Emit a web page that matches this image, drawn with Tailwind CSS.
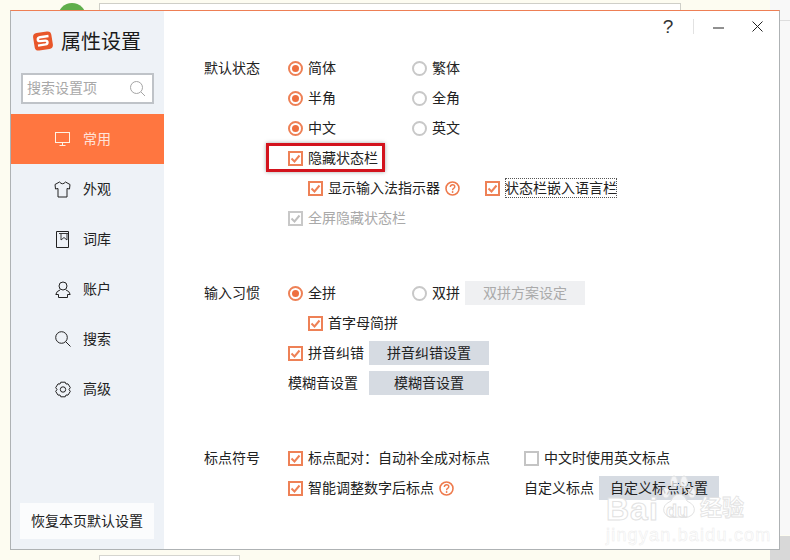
<!DOCTYPE html>
<html lang="zh-CN">
<head>
<meta charset="UTF-8">
<title>属性设置</title>
<script src="https://cdn.jsdelivr.net/npm/@tailwindcss/browser@4"></script>
</head>
<body class="relative w-[790px] h-[560px] overflow-hidden bg-[#fdfcf1] font-['Liberation_Sans','Noto_Sans_CJK_SC',sans-serif] text-[14px] text-[#222]">

<!-- desktop behind the window -->
<div class="absolute left-[58px] top-[3px] w-[28px] h-[28px] rounded-full bg-[#5fae4a]"></div>
<div class="absolute left-[99px] top-[3px] w-[582px] h-[20px] bg-white border border-[#cfcfc8]"></div>
<div class="absolute left-[770px] top-0 w-[20px] h-[535px] bg-[#f8f8f8]"></div>
<div class="absolute left-[770px] top-[20px] w-[20px] h-px bg-[#ddd]"></div>
<div class="absolute left-[770px] top-[536px] w-[20px] h-[24px] bg-[#d8d8d8]"></div>
<div class="absolute left-[99px] top-[555px] w-[141px] h-[10px] bg-white border border-[#d5d5d0]"></div>

<!-- window -->
<div class="absolute left-[10px] top-[10px] w-[770px] h-[540px] flex bg-white border border-[#aeb2b4] border-t-[#ee7f55]">
  <!-- sidebar -->
  <aside class="w-[153px] bg-[#eef2f7] flex flex-col">
    <div class="h-[60px] pl-[22px] pt-[19px] flex items-start gap-[8px]">
      <svg class="mt-[1px]" width="20" height="20" viewBox="0 0 20 20">
        <rect x="0.8" y="1.2" width="18.4" height="17.6" rx="4" fill="#e8562a" transform="rotate(-9 10 10)"/>
        <path d="M15.5 5 L7 6.2 Q4.6 6.6 4.8 8.5 Q5 10.3 7.2 10.1 L12.2 9.6 Q14.4 9.5 14.5 11.2 Q14.6 13 12.6 13.4 L5 14.6" fill="none" stroke="#fff" stroke-width="2.4"/>
      </svg>
      <span class="text-[20px] leading-[24px] text-[#1a1a1a]">属性设置</span>
    </div>
    <div class="ml-[10px] mt-[2px] w-[133px] h-[31px] bg-white border-[2px] border-[#bfc3c8] flex items-center justify-between pl-[4px] pr-[6px]">
      <span class="text-[#a8a8a8]">搜索设置项</span>
      <svg width="17" height="17" viewBox="0 0 17 17" fill="none" stroke="#a5a5a5" stroke-width="1"><circle cx="7.5" cy="7.5" r="6"/><path d="M12 12l4 4"/></svg>
    </div>
    <nav class="mt-[10px] flex flex-col">
      <a class="h-[50px] bg-[#ff7640] flex items-center pl-[44px] gap-[13px]">
        <svg class="shrink-0" width="15" height="14" viewBox="0 0 15 14" fill="none" stroke="#fff3e4" stroke-width="1"><rect x="0.5" y="0.5" width="14" height="10"/><path d="M7.5 10.5v3M4.5 13.5h6"/></svg>
        <span class="text-white/80">常用</span>
      </a>
      <a class="h-[50px] flex items-center pl-[43px] gap-[12px]">
        <svg class="shrink-0" width="17" height="17" viewBox="0 0 17 17" fill="none" stroke="#222" stroke-width="1"><path d="M5.5 1 L1 3.5 L1.5 8 L4 7.5 V16 H13 V7.5 L15.5 8 L16 3.5 L11.5 1 Q8.5 4.5 5.5 1Z"/></svg>
        <span>外观</span>
      </a>
      <a class="h-[50px] flex items-center pl-[45px] gap-[13px]">
        <svg class="shrink-0" width="14" height="17" viewBox="0 0 14 17" fill="none" stroke="#222" stroke-width="1"><path d="M0.5 0.5H12.5V16.5H0.5Z"/><path d="M3 2.5H12.5M5 3V9L8 6.5L11 9V3" stroke-width="0.9"/></svg>
        <span>词库</span>
      </a>
      <a class="h-[50px] flex items-center pl-[44px] gap-[12px]">
        <svg class="shrink-0" width="16" height="17" viewBox="0 0 16 17" fill="none" stroke="#222" stroke-width="1"><circle cx="8" cy="5" r="4"/><path d="M5 9 Q1.5 10 0.8 13.5 H3.5 V16.5 H12.5 V13.5 H15.2 Q14.5 10 11 9"/></svg>
        <span>账户</span>
      </a>
      <a class="h-[50px] flex items-center pl-[44px] gap-[12px]">
        <svg class="shrink-0" width="16" height="16" viewBox="0 0 16 16" fill="none" stroke="#222" stroke-width="1"><circle cx="6.5" cy="6.5" r="5.8"/><path d="M10.7 10.7L15.5 15.5"/></svg>
        <span>搜索</span>
      </a>
      <a class="h-[50px] flex items-center pl-[44px] gap-[12px]">
        <svg class="shrink-0" width="16" height="17" viewBox="0 0 16 17" fill="none" stroke="#222" stroke-width="1"><path d="M5.8 1.2 H10.2 L11 3 L13 2.9 L15.3 6.6 L14 8.5 L15.3 10.4 L13 14.1 L11 14 L10.2 15.8 H5.8 L5 14 L3 14.1 L0.7 10.4 L2 8.5 L0.7 6.6 L3 2.9 L5 3Z"/><circle cx="8" cy="8.5" r="2.7"/></svg>
        <span>高级</span>
      </a>
    </nav>
    <button class="mt-auto mb-[10px] ml-[9px] w-[134px] h-[36px] bg-[#fbfcfd] text-[#222]">恢复本页默认设置</button>
  </aside>

  <!-- main -->
  <main class="flex-1 relative pl-[40px] pt-[42px]">
    <!-- title bar buttons -->
    <div class="absolute right-[16px] top-[3px] h-[24px] flex items-center">
      <span class="text-[19px] leading-none text-[#333] w-[28px] text-center">?</span>
      <span class="w-px h-[15px] bg-[#e2e2e2] ml-[11px]"></span>
      <svg class="ml-[19px] mt-[3px]" width="11" height="2" viewBox="0 0 11 2"><path d="M0 1h11" stroke="#222" stroke-width="1"/></svg>
      <svg class="ml-[28px]" width="11" height="11" viewBox="0 0 11 11" fill="none" stroke="#222" stroke-width="1"><path d="M0.5 0.5L10.5 10.5M10.5 0.5L0.5 10.5"/></svg>
    </div>

    <!-- default state -->
    <section class="flex">
      <div class="w-[84px] h-[30px] leading-[30px]">默认状态</div>
      <div class="flex-1">
        <div class="h-[30px] flex items-center">
          <label class="w-[124px] flex items-center gap-[5px]"><span class="w-[15px] h-[15px] rounded-full border-[2px] border-[#ee8156] flex items-center justify-center"><span class="w-[7px] h-[7px] rounded-full bg-[#ee6f3f]"></span></span>简体</label>
          <label class="flex items-center gap-[5px]"><span class="w-[15px] h-[15px] rounded-full border-[2px] border-[#c8c8c8]"></span>繁体</label>
        </div>
        <div class="h-[30px] flex items-center">
          <label class="w-[124px] flex items-center gap-[5px]"><span class="w-[15px] h-[15px] rounded-full border-[2px] border-[#ee8156] flex items-center justify-center"><span class="w-[7px] h-[7px] rounded-full bg-[#ee6f3f]"></span></span>半角</label>
          <label class="flex items-center gap-[5px]"><span class="w-[15px] h-[15px] rounded-full border-[2px] border-[#c8c8c8]"></span>全角</label>
        </div>
        <div class="h-[30px] flex items-center">
          <label class="w-[124px] flex items-center gap-[5px]"><span class="w-[15px] h-[15px] rounded-full border-[2px] border-[#ee8156] flex items-center justify-center"><span class="w-[7px] h-[7px] rounded-full bg-[#ee6f3f]"></span></span>中文</label>
          <label class="flex items-center gap-[5px]"><span class="w-[15px] h-[15px] rounded-full border-[2px] border-[#c8c8c8]"></span>英文</label>
        </div>
        <div class="h-[30px] flex items-center gap-[5px]">
          <svg width="15" height="15" viewBox="0 0 15 15" fill="none"><rect x="1" y="1" width="13" height="13" stroke="#ee8156" stroke-width="2"/><path d="M3.5 7.5L6.5 10.5L11.5 4.5" stroke="#ee8156" stroke-width="2"/></svg>
          <span>隐藏状态栏</span>
        </div>
        <div class="h-[30px] flex items-center pl-[20px]">
          <svg width="15" height="15" viewBox="0 0 15 15" fill="none"><rect x="1" y="1" width="13" height="13" stroke="#ee8156" stroke-width="2"/><path d="M3.5 7.5L6.5 10.5L11.5 4.5" stroke="#ee8156" stroke-width="2"/></svg>
          <span class="ml-[5px]">显示输入法指示器</span>
          <svg class="ml-[5px]" width="15" height="15" viewBox="0 0 15 15" fill="none"><circle cx="7.5" cy="7.5" r="6.5" stroke="#ee7a4c" stroke-width="1.6"/><path d="M5.3 6Q5.5 3.8 7.6 3.8Q9.8 3.8 9.8 5.7Q9.8 6.8 8.6 7.4Q7.6 7.9 7.6 9.2" stroke="#ee7a4c" stroke-width="1.4"/><circle cx="7.6" cy="11" r="0.9" fill="#ee7a4c"/></svg>
          <svg class="ml-[25px]" width="15" height="15" viewBox="0 0 15 15" fill="none"><rect x="1" y="1" width="13" height="13" stroke="#ee8156" stroke-width="2"/><path d="M3.5 7.5L6.5 10.5L11.5 4.5" stroke="#ee8156" stroke-width="2"/></svg>
          <span class="ml-[5px] outline outline-1 outline-dotted outline-offset-[-1px] outline-[#555] leading-[20px]">状态栏嵌入语言栏</span>
        </div>
        <div class="h-[30px] flex items-center gap-[5px] text-[#a9a9a9]">
          <svg width="15" height="15" viewBox="0 0 15 15" fill="none"><rect x="1" y="1" width="13" height="13" stroke="#c8c8c8" stroke-width="2"/><path d="M3.5 7.5L6.5 10.5L11.5 4.5" stroke="#c0c0c0" stroke-width="2"/></svg>
          <span>全屏隐藏状态栏</span>
        </div>
      </div>
    </section>

    <!-- input habit -->
    <section class="flex mt-[45px]">
      <div class="w-[84px] h-[30px] leading-[30px]">输入习惯</div>
      <div class="flex-1">
        <div class="h-[30px] flex items-center">
          <label class="w-[124px] flex items-center gap-[5px]"><span class="w-[15px] h-[15px] rounded-full border-[2px] border-[#ee8156] flex items-center justify-center"><span class="w-[7px] h-[7px] rounded-full bg-[#ee6f3f]"></span></span>全拼</label>
          <label class="flex items-center gap-[5px]"><span class="w-[15px] h-[15px] rounded-full border-[2px] border-[#c8c8c8]"></span>双拼</label>
          <button class="ml-[5px] w-[120px] h-[24px] bg-[#eff0f2] text-[#aaa]">双拼方案设定</button>
        </div>
        <div class="h-[30px] flex items-center gap-[5px] pl-[20px]">
          <svg width="15" height="15" viewBox="0 0 15 15" fill="none"><rect x="1" y="1" width="13" height="13" stroke="#ee8156" stroke-width="2"/><path d="M3.5 7.5L6.5 10.5L11.5 4.5" stroke="#ee8156" stroke-width="2"/></svg>
          <span>首字母简拼</span>
        </div>
        <div class="h-[30px] flex items-center">
          <svg width="15" height="15" viewBox="0 0 15 15" fill="none"><rect x="1" y="1" width="13" height="13" stroke="#ee8156" stroke-width="2"/><path d="M3.5 7.5L6.5 10.5L11.5 4.5" stroke="#ee8156" stroke-width="2"/></svg>
          <span class="ml-[5px] w-[61px]">拼音纠错</span>
          <button class="w-[120px] h-[24px] bg-[#d6dbe2]">拼音纠错设置</button>
        </div>
        <div class="h-[30px] flex items-center">
          <span class="w-[81px]">模糊音设置</span>
          <button class="w-[120px] h-[24px] bg-[#d6dbe2]">模糊音设置</button>
        </div>
      </div>
    </section>

    <!-- punctuation -->
    <section class="flex mt-[45px]">
      <div class="w-[84px] h-[30px] leading-[30px]">标点符号</div>
      <div class="flex-1">
        <div class="h-[30px] flex items-center">
          <svg width="15" height="15" viewBox="0 0 15 15" fill="none"><rect x="1" y="1" width="13" height="13" stroke="#ee8156" stroke-width="2"/><path d="M3.5 7.5L6.5 10.5L11.5 4.5" stroke="#ee8156" stroke-width="2"/></svg>
          <span class="ml-[5px] w-[216px]">标点配对：自动补全成对标点</span>
          <svg width="15" height="15" viewBox="0 0 15 15" fill="none"><rect x="1" y="1" width="13" height="13" stroke="#c4c4c4" stroke-width="2"/></svg>
          <span class="ml-[5px]">中文时使用英文标点</span>
        </div>
        <div class="h-[30px] flex items-center">
          <svg width="15" height="15" viewBox="0 0 15 15" fill="none"><rect x="1" y="1" width="13" height="13" stroke="#ee8156" stroke-width="2"/><path d="M3.5 7.5L6.5 10.5L11.5 4.5" stroke="#ee8156" stroke-width="2"/></svg>
          <span class="ml-[5px]">智能调整数字后标点</span>
          <svg class="ml-[5px]" width="15" height="15" viewBox="0 0 15 15" fill="none"><circle cx="7.5" cy="7.5" r="6.5" stroke="#ee7a4c" stroke-width="1.6"/><path d="M5.3 6Q5.5 3.8 7.6 3.8Q9.8 3.8 9.8 5.7Q9.8 6.8 8.6 7.4Q7.6 7.9 7.6 9.2" stroke="#ee7a4c" stroke-width="1.4"/><circle cx="7.6" cy="11" r="0.9" fill="#ee7a4c"/></svg>
          <span class="ml-[70px] w-[75px]">自定义标点</span>
          <button class="w-[120px] h-[24px] bg-[#d6dbe2]">自定义标点设置</button>
        </div>
      </div>
    </section>
  </main>
</div>

<!-- red annotation -->
<div class="absolute left-[266px] top-[143px] w-[119px] h-[29px] border-[3px] border-[#d3131d] shadow-[0_0_4px_rgba(0,0,0,0.35)]"></div>

<!-- watermark -->
<div class="absolute left-[606px] top-[484px] w-[142px] h-[62px] text-white pointer-events-none">
  <svg class="absolute left-[52px] top-[-9px]" width="42" height="45" viewBox="0 0 42 45" fill="#fff" fill-opacity="0.7" stroke="#e2e2e2">
    <ellipse cx="8" cy="18" rx="3.5" ry="5"/>
    <ellipse cx="16" cy="7" rx="3.5" ry="6"/>
    <ellipse cx="26" cy="7" rx="3.5" ry="6"/>
    <ellipse cx="34" cy="18" rx="3.5" ry="5"/>
    <path d="M21 19 Q16 19 13 26 Q4 30 6 37 Q9 44 21 42 Q33 44 36 37 Q38 30 29 26 Q26 19 21 19Z"/>
  </svg>
  <span class="absolute left-0 top-[9px] text-[32px] leading-none tracking-[1px] font-bold [-webkit-text-stroke:1px_#e2e2e2]">Bai</span>
  <span class="absolute left-[60px] top-[18px] text-[18px] leading-none font-bold [-webkit-text-stroke:0.8px_#dedede]">du</span>
  <span class="absolute left-[94px] top-[13px] text-[22px] leading-none font-bold [-webkit-text-stroke:0.8px_#e2e2e2]">经验</span>
  <span class="absolute left-0 top-[42px] text-[18px] leading-none tracking-[1.2px] text-white/90 [-webkit-text-stroke:0.5px_#ececec]">jingyan.baidu.com</span>
</div>
</body>
</html>
